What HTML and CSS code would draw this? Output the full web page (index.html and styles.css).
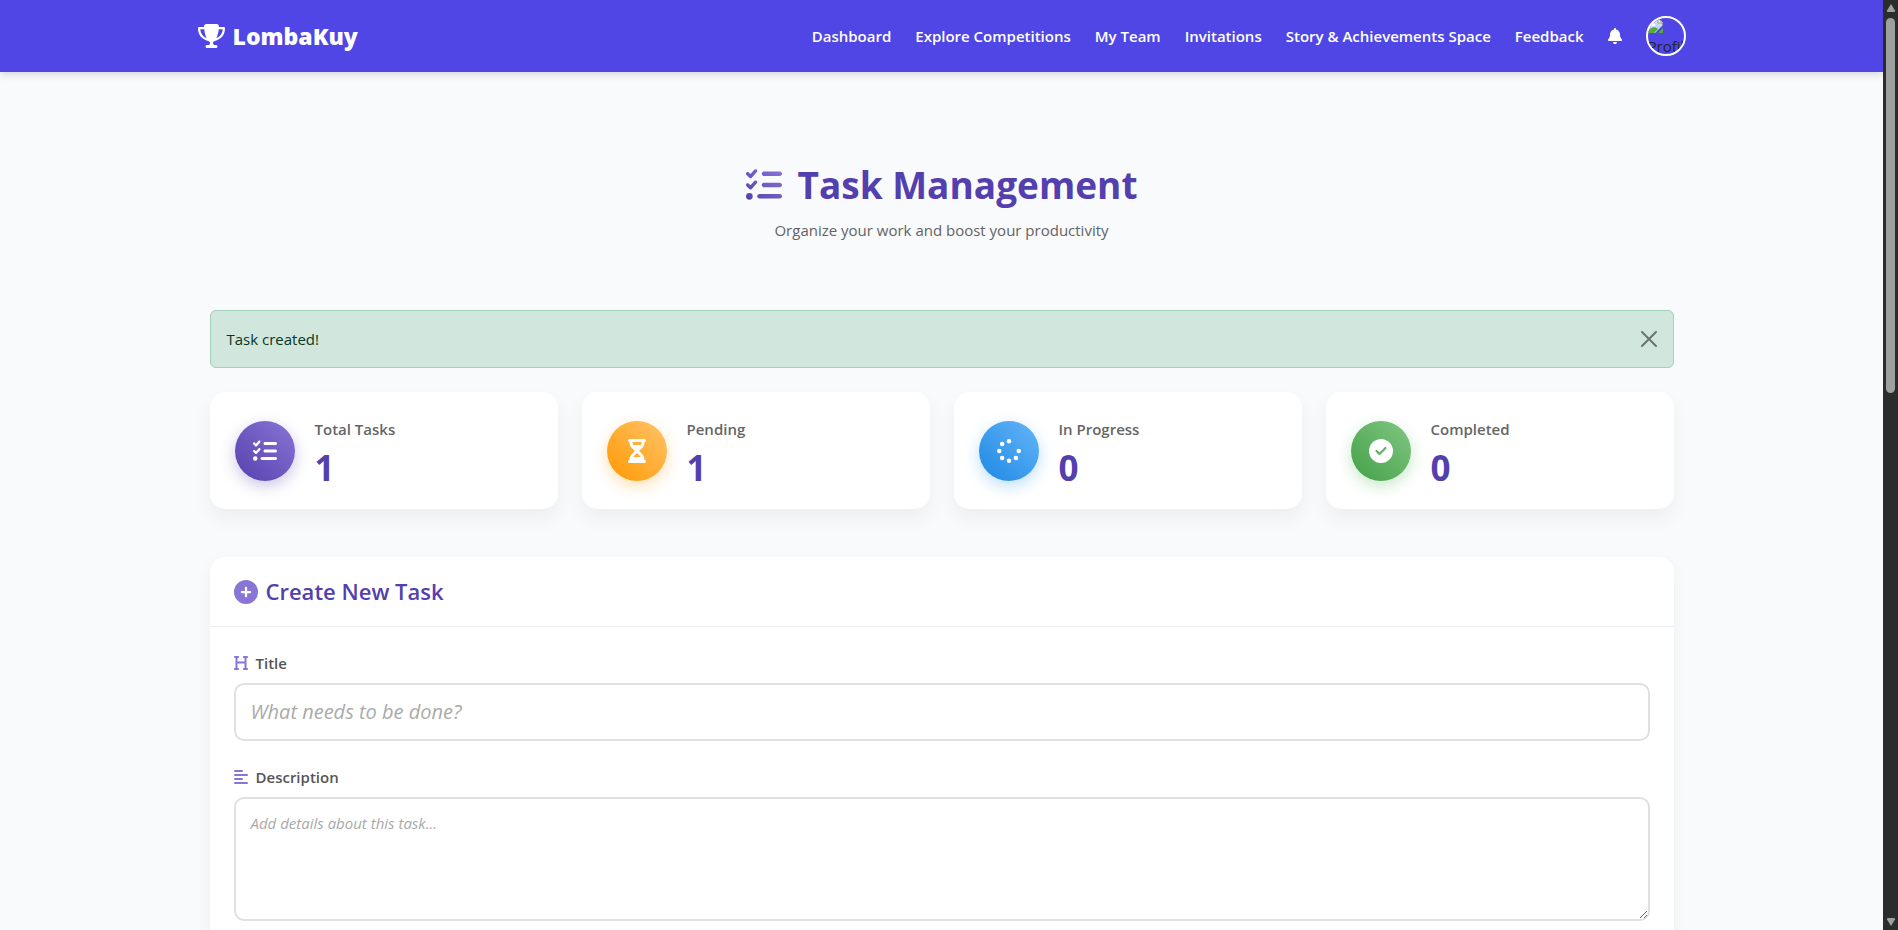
FILE: index.html
```html
<!DOCTYPE html>
<html lang="en">
<head>
<meta charset="utf-8">
<title>Task Management - LombaKuy</title>
<meta name="viewport" content="width=device-width, initial-scale=1">
<link rel="stylesheet" href="styles.css">
</head>
<body>
<svg class="sprite" aria-hidden="true">
  <defs>
    <linearGradient id="violet" x1="0" y1="1" x2="1" y2="0"><stop offset="0" stop-color="#5640ad"/><stop offset="1" stop-color="#8975d6"/></linearGradient>
    <symbol id="list-check" viewBox="0 0 512 512"><path d="M152.1 38.2c9.9 8.9 10.7 24 1.8 33.9l-72 80c-4.4 4.9-10.6 7.8-17.2 7.9s-12.9-2.4-17.6-7L7 113C-2.3 103.6-2.3 88.4 7 79s24.6-9.4 33.9 0l22.1 22.1 55.1-61.2c8.9-9.9 24-10.7 33.9-1.8zm0 160c9.9 8.9 10.7 24 1.8 33.9l-72 80c-4.4 4.9-10.6 7.8-17.2 7.9s-12.9-2.4-17.6-7L7 273c-9.4-9.4-9.4-24.6 0-33.9s24.6-9.4 33.9 0l22.1 22.1 55.1-61.2c8.9-9.9 24-10.7 33.9-1.8zM224 96c0-17.7 14.3-32 32-32l224 0c17.7 0 32 14.3 32 32s-14.3 32-32 32l-224 0c-17.7 0-32-14.3-32-32zm0 160c0-17.7 14.3-32 32-32l224 0c17.7 0 32 14.3 32 32s-14.3 32-32 32l-224 0c-17.7 0-32-14.3-32-32zM160 416c0-17.7 14.3-32 32-32l288 0c17.7 0 32 14.3 32 32s-14.3 32-32 32l-288 0c-17.7 0-32-14.3-32-32zM48 368a48 48 0 1 1 0 96 48 48 0 1 1 0-96z"/></symbol>
  </defs>
</svg>
<div class="window">
  <div class="page">
    <header class="navbar">
      <div class="navbar-inner">
        <a class="brand" href="#">
          <svg class="brand-icon" viewBox="0 0 576 512" aria-hidden="true"><path d="M400 0L176 0c-26.5 0-48.1 21.8-47.1 48.2c.2 5.3 .4 10.6 .7 15.8L24 64C10.7 64 0 74.7 0 88c0 92.6 33.5 157 78.5 200.7c44.3 43.1 98.3 64.8 138.1 75.8c23.4 6.5 39.4 26 39.4 45.6c0 20.9-17 37.9-37.9 37.9L192 448c-17.7 0-32 14.3-32 32s14.3 32 32 32l192 0c17.7 0 32-14.3 32-32s-14.3-32-32-32l-26.1 0C337 448 320 431 320 410.1c0-19.6 15.9-39.2 39.4-45.6c39.9-11 93.9-32.7 138.2-75.8C542.5 245 576 180.6 576 88c0-13.3-10.7-24-24-24L446.4 64c.3-5.2 .5-10.4 .7-15.8C448.1 21.8 426.5 0 400 0zM48.9 112l84.4 0c9.1 90.1 29.2 150.3 51.9 190.6c-24.9-11-50.8-26.5-73.2-48.3c-32-31.1-58-76-63-142.3zM464.1 254.3c-22.4 21.8-48.3 37.3-73.2 48.3c22.7-40.3 42.8-100.5 51.9-190.6l84.4 0c-5.1 66.3-31.1 111.2-63 142.3z"/></svg>
          <span>LombaKuy</span>
        </a>
        <nav class="nav-links" aria-label="Main">
          <a href="#">Dashboard</a>
          <a href="#">Explore Competitions</a>
          <a href="#">My Team</a>
          <a href="#">Invitations</a>
          <a href="#">Story &amp; Achievements Space</a>
          <a href="#">Feedback</a>
          <a href="#" aria-label="Notifications"><svg class="bell" viewBox="0 0 448 512" aria-hidden="true"><path d="M224 0c-17.7 0-32 14.3-32 32l0 19.2C119 66 64 130.6 64 208l0 18.8c0 47-17.3 92.4-48.5 127.6l-7.4 8.3c-8.4 9.4-10.4 22.9-5.3 34.4S19.4 416 32 416l384 0c12.6 0 24-7.4 29.2-18.9s3.1-25-5.3-34.4l-7.4-8.3C401.3 319.2 384 273.9 384 226.8l0-18.8c0-77.4-55-142-128-156.8L256 32c0-17.7-14.3-32-32-32zm45.3 493.3c12-12 18.7-28.3 18.7-45.3l-64 0-64 0c0 17 6.7 33.3 18.7 45.3s28.3 18.7 45.3 18.7s33.3-6.7 45.3-18.7z"/></svg></a>
          <button class="avatar" type="button">
            <svg class="avatar-icon" viewBox="0 0 16 16" aria-hidden="true"><path fill="#c5d8f7" d="M0 0h10l5 5v2L7 15H0z"/><path fill="#fff" d="M10 0l5 5h-5zM3 6c0-2 3-2 3 0 2 0 2 2 0 2H3C1 8 1 6 3 6z"/><path fill="#55ad34" d="M0 15v-2c3-4 7-5 10-2l-4 4zM15 10v5h-5z"/><path fill="none" stroke="#9a9a9a" d="M.5 15V.5H10L14.500 5v2.500M10 .5V5h4.500"/></svg>
            <span>Profile</span>
          </button>
        </nav>
      </div>
    </header>

    <main class="content">
      <div class="heading">
        <h1><svg class="heading-icon" viewBox="0 0 512 512" aria-hidden="true"><use href="#list-check"/></svg>Task Management</h1>
        <p>Organize your work and boost your productivity</p>
      </div>

      <div class="alert" role="alert">
        <span>Task created!</span>
        <button class="alert-close" type="button" aria-label="Close"><svg viewBox="0 0 16 16" aria-hidden="true"><path d="M1 1l14 14M15 1L1 15"/></svg></button>
      </div>

      <section class="stats" aria-label="Task statistics">
        <article class="stat">
          <div class="stat-icon total"><svg viewBox="0 0 512 512" aria-hidden="true"><use href="#list-check"/></svg></div>
          <div><h2>Total Tasks</h2><p>1</p></div>
        </article>
        <article class="stat">
          <div class="stat-icon pending"><svg viewBox="-64 0 512 512" aria-hidden="true"><path d="M32 0C14.3 0 0 14.3 0 32S14.3 64 32 64l0 11c0 42.4 16.9 83.1 46.9 113.1L146.7 256 78.9 323.9C48.9 353.9 32 394.6 32 437l0 11c-17.7 0-32 14.3-32 32s14.3 32 32 32l320 0c17.7 0 32-14.3 32-32s-14.3-32-32-32l0-11c0-42.4-16.9-83.1-46.9-113.1L237.3 256l67.9-67.9c30-30 46.9-70.7 46.9-113.1l0-11c17.7 0 32-14.3 32-32s-14.3-32-32-32L32 0zM96 75l0-11 192 0 0 11c0 19-5.6 37.4-16 53L112 128c-10.3-15.6-16-34-16-53zm16 309c3.5-5.3 7.6-10.3 12.1-14.9L192 301.3l67.9 67.9c4.6 4.6 8.6 9.6 12.1 14.9L112 384z"/></svg></div>
          <div><h2>Pending</h2><p>1</p></div>
        </article>
        <article class="stat">
          <div class="stat-icon progress"><svg viewBox="0 0 512 512" aria-hidden="true"><circle cx="256" cy="48" r="48"/><circle cx="109" cy="109" r="48"/><circle cx="48" cy="256" r="48"/><circle cx="109" cy="403" r="48"/><circle cx="256" cy="464" r="48"/><circle cx="403" cy="403" r="48"/><circle cx="464" cy="256" r="48"/></svg></div>
          <div><h2>In Progress</h2><p>0</p></div>
        </article>
        <article class="stat">
          <div class="stat-icon completed"><svg viewBox="0 0 512 512" aria-hidden="true"><path d="M256 512A256 256 0 1 0 256 0a256 256 0 1 0 0 512zM369 209L241 337c-9.4 9.4-24.6 9.4-33.9 0l-64-64c-9.4-9.4-9.4-24.6 0-33.9s24.6-9.4 33.9 0l47 47L335 175c9.4-9.4 24.6-9.4 33.9 0s9.4 24.6 0 33.9z"/></svg></div>
          <div><h2>Completed</h2><p>0</p></div>
        </article>
      </section>

      <section class="panel">
        <h2 class="panel-title"><svg viewBox="0 0 512 512" aria-hidden="true"><path d="M256 512A256 256 0 1 0 256 0a256 256 0 1 0 0 512zM232 344l0-64-64 0c-13.3 0-24-10.7-24-24s10.7-24 24-24l64 0 0-64c0-13.3 10.7-24 24-24s24 10.7 24 24l0 64 64 0c13.3 0 24 10.7 24 24s-10.7 24-24 24l-64 0 0 64c0 13.3-10.7 24-24 24s-24-10.7-24-24z"/></svg>Create New Task</h2>
        <form class="panel-body">
          <div class="field">
            <label for="title"><svg viewBox="0 0 448 512" aria-hidden="true"><path d="M0 64C0 46.3 14.3 32 32 32l96 0c17.7 0 32 14.3 32 32s-14.3 32-32 32l-16 0 0 112 224 0 0-112-16 0c-17.7 0-32-14.3-32-32s14.3-32 32-32l96 0c17.7 0 32 14.3 32 32s-14.3 32-32 32l-16 0 0 320 16 0c17.7 0 32 14.3 32 32s-14.3 32-32 32l-96 0c-17.7 0-32-14.3-32-32s14.3-32 32-32l16 0 0-144-224 0 0 144 16 0c17.7 0 32 14.3 32 32s-14.3 32-32 32l-96 0c-17.7 0-32-14.3-32-32s14.3-32 32-32l16 0L48 96 32 96C14.3 96 0 81.7 0 64z"/></svg>Title</label>
            <input id="title" type="text" placeholder="What needs to be done?">
          </div>
          <div class="field">
            <label for="description"><svg viewBox="0 0 448 512" aria-hidden="true"><rect y="32" width="288" height="64" rx="32"/><rect y="160" width="448" height="64" rx="32"/><rect y="288" width="288" height="64" rx="32"/><rect y="416" width="448" height="64" rx="32"/></svg>Description</label>
            <textarea id="description" placeholder="Add details about this task..."></textarea>
          </div>
        </form>
      </section>
    </main>
  </div>
  <div class="scrollbar" aria-hidden="true">
    <svg viewBox="0 0 10 8"><path d="M5 0l4 6.500q.5 1.500-1 1.500H2Q.5 8 1 6.500z"/></svg>
    <div class="track"><div class="thumb"></div></div>
    <svg viewBox="0 0 10 8"><path d="M5 8L1 1.500Q.5 0 2 0h6q1.500 0 1 1.500z"/></svg>
  </div>
</div>
</body>
</html>
```

FILE: styles.css
```css
*, *::before, *::after { box-sizing: border-box; }

body {
  margin: 0;
  background: #f9fafc;
  color: #212529;
  font-family: "Segoe UI", "Open Sans", "Noto Sans", sans-serif;
  font-size: 15px;
  line-height: 24px;
}

h1, h2, p { margin: 0; }
button, input, textarea { font: inherit; }
svg { display: block; fill: currentColor; flex: none; }
.sprite { position: absolute; width: 0; height: 0; }

.window { display: flex; height: 100vh; overflow: hidden; }
.page { flex: 1; min-width: 0; overflow: hidden; }

.navbar {
  background: #4f46e5;
  box-shadow: 0 2px 8px rgba(0, 0, 0, 0.15);
}
.navbar-inner {
  display: flex;
  align-items: center;
  justify-content: space-between;
  max-width: 1536px;
  min-height: 72px;
  margin: 0 auto;
  padding: 0 24px;
}
.brand {
  display: flex;
  align-items: center;
  gap: 8px;
  color: #fff;
  font-size: 23px;
  font-weight: 800;
  line-height: 26px;
  text-decoration: none;
}
.brand-icon { width: 27px; height: 24px; }
.nav-links { display: flex; align-items: center; gap: 24px; }
.nav-links a { color: #fff; font-weight: 600; text-decoration: none; white-space: nowrap; }
.bell { width: 14px; height: 16px; }

.avatar {
  width: 40px;
  height: 40px;
  padding: 0;
  overflow: hidden;
  border: 2px solid #fff;
  border-radius: 50%;
  background: transparent;
  color: #212529;
  text-align: left;
}
.avatar-icon { width: 16px; height: 16px; }

.content { max-width: 1536px; margin: 0 auto; padding: 84px 36px 0; }

.heading { margin-bottom: 68px; text-align: center; }
.heading h1 {
  display: flex;
  align-items: center;
  justify-content: center;
  gap: 16px;
  margin-bottom: 4px;
  color: #533fad;
  font-size: 37px;
  font-weight: 700;
  line-height: 58px;
}
.heading-icon { width: 36px; height: 36px; fill: url(#violet); }
.heading p { color: #636363; }

.alert {
  display: flex;
  align-items: center;
  justify-content: space-between;
  margin-bottom: 24px;
  padding: 16px;
  border: 1px solid #a3cfbb;
  border-radius: 6px;
  background: #d1e7dd;
  color: #0a3622;
}
.alert-close { padding: 0; border: 0; background: none; color: #69756f; }
.alert-close svg { width: 16px; height: 16px; stroke: currentColor; stroke-width: 2; stroke-linecap: round; }

.stats {
  display: grid;
  grid-template-columns: repeat(4, 1fr);
  gap: 24px;
  margin-bottom: 48px;
}
.stat {
  display: flex;
  align-items: center;
  gap: 20px;
  padding: 21px 25px;
  border-radius: 15px;
  background: #fff;
  box-shadow: 0 10px 20px rgba(0, 0, 0, 0.05);
}
.stat h2 { color: #666; font-size: 15px; font-weight: 600; line-height: 32px; }
.stat p { padding-top: 2px; color: #533fad; font-size: 35px; font-weight: 700; line-height: 41px; }
.stat-icon {
  display: grid;
  place-items: center;
  width: 60px;
  height: 60px;
  border-radius: 50%;
  color: #fff;
}
.stat-icon svg { width: 24px; height: 24px; }
.total { background: linear-gradient(45deg, #5640ad, #8975d6); box-shadow: 0 5px 15px rgba(86, 64, 173, 0.3); }
.pending { background: linear-gradient(45deg, #ff9800, #ffc46b); box-shadow: 0 5px 15px rgba(255, 152, 0, 0.3); }
.progress { background: linear-gradient(45deg, #1e88e5, #64b5f6); box-shadow: 0 5px 15px rgba(33, 150, 243, 0.3); }
.completed { background: linear-gradient(45deg, #43a047, #81c784); box-shadow: 0 5px 15px rgba(76, 175, 80, 0.3); }

.panel {
  border-radius: 15px;
  background: #fff;
  box-shadow: 0 5px 15px rgba(0, 0, 0, 0.05);
}
.panel-title {
  display: flex;
  align-items: center;
  gap: 8px;
  padding: 20px 24px;
  border-bottom: 1px solid #eee;
  color: #533fad;
  font-size: 22px;
  font-weight: 600;
  line-height: 29px;
}
.panel-title svg { width: 24px; height: 24px; fill: #8975d6; }
.panel-body { display: grid; gap: 24px; padding: 24px; }
.field { display: grid; gap: 8px; }
.field label {
  display: flex;
  align-items: center;
  gap: 8px;
  color: #555;
  font-weight: 600;
}
.field label svg { width: 14px; height: 16px; fill: #8975d6; }
.field input, .field textarea {
  display: block;
  width: 100%;
  border: 2px solid #e0e0e0;
  border-radius: 10px;
  background: #fff;
  color: #333;
}
.field input { padding: 12px 15px; font-size: 20px; line-height: 30px; }
.field textarea { min-height: 124px; padding: 12px 15px; resize: vertical; }
.field ::placeholder { color: #aaa; font-style: italic; opacity: 1; }

.scrollbar {
  display: flex;
  flex-direction: column;
  align-items: center;
  width: 15px;
  padding: 4px 0;
  background: #2c2c2c;
  color: #9f9f9f;
}
.scrollbar svg { width: 10px; height: 8px; }
.track { flex: 1; width: 9px; padding: 6px 0; }
.thumb { height: 42%; border-radius: 5px; background: #9f9f9f; }
```
